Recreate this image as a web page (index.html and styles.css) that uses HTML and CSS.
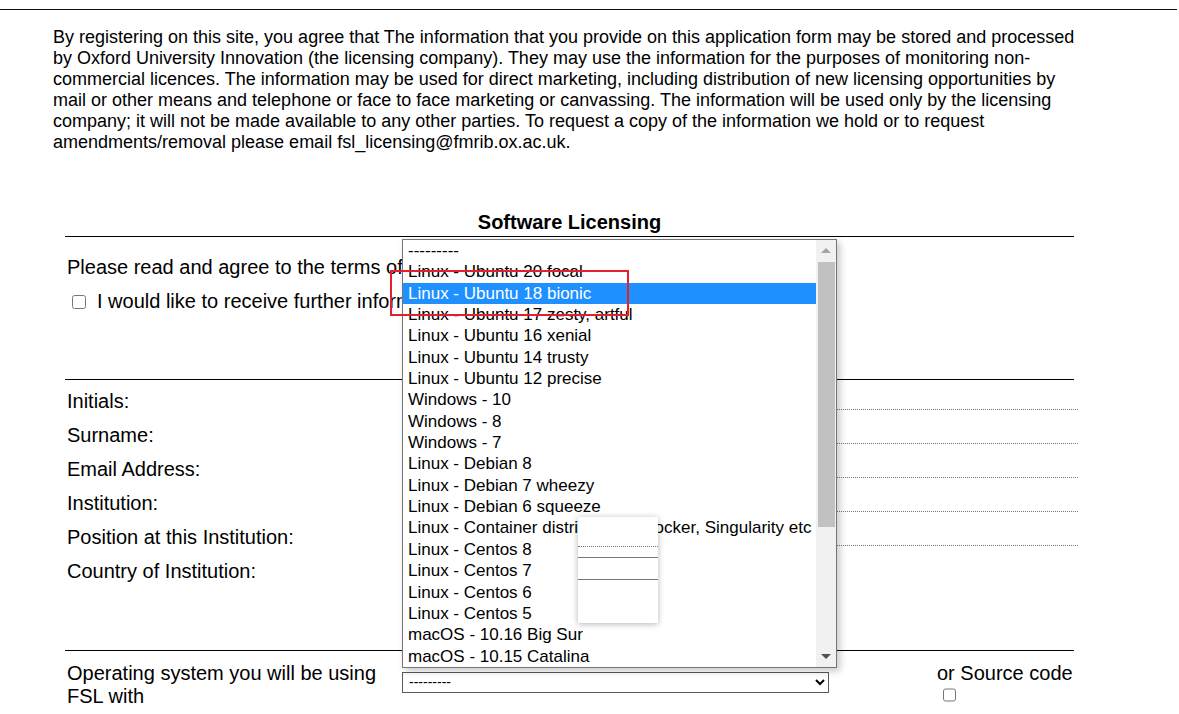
FILE: index.html
```html
<!DOCTYPE html>
<html>
<head>
<meta charset="utf-8">
<title>FSL Registration</title>
<link rel="stylesheet" href="styles.css">
</head>
<body>
<div class="top-rule"></div>
<p class="intro">By registering on this site, you agree that The information that you provide on this application form may be stored and processed by Oxford University Innovation (the licensing company). They may use the information for the purposes of monitoring non-commercial licences. The information may be used for direct marketing, including distribution of new licensing opportunities by mail or other means and telephone or face to face marketing or canvassing. The information will be used only by the licensing company; it will not be made available to any other parties. To request a copy of the information we hold or to request amendments/removal please email fsl_licensing@fmrib.ox.ac.uk.</p>

<div class="form">
  <div class="title">Software Licensing</div>

  <div class="terms">
    <div class="terms-line">Please read and agree to the terms of the FSL licence</div>
    <label class="check-line"><input type="checkbox" class="cb"><span>I would like to receive further information about FSL</span></label>
  </div>

  <div class="fields">
    <div class="field"><span class="lbl">Initials:</span><input class="txt" type="text"></div>
    <div class="field"><span class="lbl">Surname:</span><input class="txt" type="text"></div>
    <div class="field"><span class="lbl">Email Address:</span><input class="txt" type="text"></div>
    <div class="field"><span class="lbl">Institution:</span><input class="txt" type="text"></div>
    <div class="field"><span class="lbl">Position at this Institution:</span><input class="txt" type="text"></div>
    <div class="field"><span class="lbl">Country of Institution:</span><span></span></div>
  </div>

  <div class="os-row">
    <div class="os-label">Operating system you will be using FSL with</div>
    <div class="os-select-wrap">
      <select class="os-select"><option>---------</option></select>
    </div>
    <div class="src">
      <span>or Source code</span>
      <input type="checkbox" class="cb2">
    </div>
  </div>
</div>

<div class="dropdown">
  <ul class="opts">
    <li>---------</li>
    <li>Linux - Ubuntu 20 focal</li>
    <li class="sel">Linux - Ubuntu 18 bionic</li>
    <li>Linux - Ubuntu 17 zesty, artful</li>
    <li>Linux - Ubuntu 16 xenial</li>
    <li>Linux - Ubuntu 14 trusty</li>
    <li>Linux - Ubuntu 12 precise</li>
    <li>Windows - 10</li>
    <li>Windows - 8</li>
    <li>Windows - 7</li>
    <li>Linux - Debian 8</li>
    <li>Linux - Debian 7 wheezy</li>
    <li>Linux - Debian 6 squeeze</li>
    <li>Linux - Container distributions, Docker, Singularity etc</li>
    <li>Linux - Centos 8</li>
    <li>Linux - Centos 7</li>
    <li>Linux - Centos 6</li>
    <li>Linux - Centos 5</li>
    <li>macOS - 10.16 Big Sur</li>
    <li>macOS - 10.15 Catalina</li>
  </ul>
  <div class="sbar">
    <div class="arrow up"></div>
    <div class="thumb"></div>
    <div class="arrow down"></div>
  </div>
</div>

<div class="hole">
  <div class="hole-dotted"></div>
  <div class="hole-line1"></div>
  <div class="hole-line2"></div>
</div>

<div class="highlight-box"></div>
</body>
</html>
```

FILE: styles.css
```css
html, body {
  margin: 0;
  padding: 0;
  background: #fff;
}
body {
  font-family: "Liberation Sans", Arial, sans-serif;
  color: #000;
  width: 1179px;
  height: 714px;
  overflow: hidden;
}
.top-rule {
  height: 9px;
  border-bottom: 1px solid #111;
  width: 1177px;
}
.intro {
  margin: 17px 0 0 53px;
  width: 1030px;
  font-size: 18px;
  line-height: 21px;
}
.form {
  margin: 58px 0 0 65px;
  width: 1009px;
}
.title {
  text-align: center;
  font-weight: bold;
  font-size: 20px;
  line-height: 23px;
  padding-bottom: 2px;
  border-bottom: 1px solid #000;
}
.terms {
  padding: 19px 0 0 2px;
  height: 123px;
  border-bottom: 1px solid #000;
  font-size: 20px;
  line-height: 23px;
  white-space: nowrap;
  overflow: hidden;
}
.check-line {
  display: flex;
  align-items: center;
  margin-top: 11px;
}
.cb {
  width: 14px;
  height: 14px;
  margin: 0 11px 0 5px;
}
.fields {
  padding-top: 9.5px;
  height: 260.5px;
  border-bottom: 1px solid #000;
}
.field {
  display: grid;
  grid-template-columns: 337px 676px;
  height: 34.2px;
  font-size: 20px;
  line-height: 23px;
}
.lbl {
  padding-left: 2px;
}
.txt {
  box-sizing: border-box;
  height: 20px;
  margin: 0;
  padding: 0;
  border: none;
  border-bottom: 1px dotted #777;
  outline: none;
  background: transparent;
}
.os-row {
  display: grid;
  grid-template-columns: 337px 427px 1fr;
  padding-top: 10.5px;
  font-size: 20px;
  line-height: 23px;
}
.os-label {
  padding-left: 2px;
  padding-right: 8px;
}
.os-select-wrap {
  padding-top: 7.5px;
}
.os-select {
  width: 427px;
  height: 21px;
  border: 1px solid #5a5a5a;
  border-radius: 0;
  background: #fff;
  font-family: "Liberation Sans", Arial, sans-serif;
  font-size: 14px;
  padding: 0 2px;
  margin: 0;
  color: #000;
}
.src {
  display: flex;
  flex-direction: column;
  align-items: flex-start;
  padding-left: 108px;
}
.cb2 {
  width: 13px;
  height: 14px;
  margin: 3px 0 0 6px;
}

/* open select dropdown */
.dropdown {
  position: absolute;
  left: 402px;
  top: 239px;
  width: 433px;
  height: 427px;
  border: 1px solid #767676;
  background: #fff;
  box-shadow: 3px 3px 7px rgba(0, 0, 0, 0.22);
  display: flex;
  overflow: hidden;
}
.opts {
  list-style: none;
  margin: 0;
  padding: 0;
  width: 413px;
  font-size: 17px;
  overflow: hidden;
}
.opts li {
  height: 21.35px;
  line-height: 21.35px;
  padding-left: 5px;
  white-space: nowrap;
  overflow: hidden;
}
.opts li.sel {
  background: #1e90ff;
  color: #fff;
}
.sbar {
  width: 20px;
  background: #f1f1f1;
  position: relative;
}
.thumb {
  position: absolute;
  left: 2px;
  top: 22px;
  width: 17px;
  height: 265px;
  background: #c1c1c1;
}
.arrow {
  position: absolute;
  left: 5px;
  width: 0;
  height: 0;
  border-left: 5px solid transparent;
  border-right: 5px solid transparent;
}
.arrow.up {
  top: 8px;
  border-bottom: 5px solid #a3a3a3;
}
.arrow.down {
  bottom: 8px;
  border-top: 5px solid #505050;
}

.hole {
  position: absolute;
  left: 578px;
  top: 517px;
  width: 80px;
  height: 106px;
  background: #fff;
  box-shadow: 0 1px 6px rgba(0, 0, 0, 0.3);
}
.hole-dotted {
  position: absolute;
  left: 0;
  right: 0;
  top: 29px;
  border-top: 1px dotted #777;
}
.hole-line1 {
  position: absolute;
  left: 0;
  right: 0;
  top: 40px;
  border-top: 1px solid #777;
}
.hole-line2 {
  position: absolute;
  left: 0;
  right: 0;
  top: 62px;
  border-top: 1px solid #777;
}

.highlight-box {
  position: absolute;
  left: 390px;
  top: 270px;
  width: 235px;
  height: 42px;
  border: 2px solid #e5202e;
}
```
